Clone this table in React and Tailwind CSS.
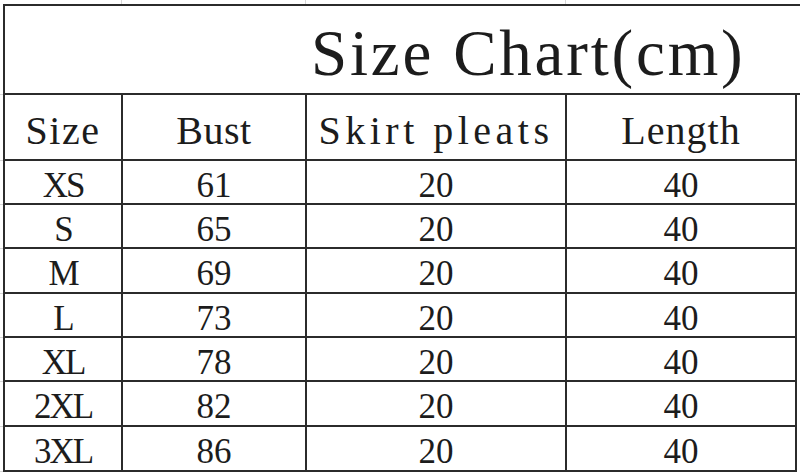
const rows = [
  { size: 'XS', bust: 61, h: 'h-[44px]' },
  { size: 'S', bust: 65, h: 'h-[44px]' },
  { size: 'M', bust: 69, h: 'h-[45px]' },
  { size: 'L', bust: 73, h: 'h-[44px]' },
  { size: 'XL', bust: 78, h: 'h-[44px]' },
  { size: '2XL', bust: 82, h: 'h-[45px]' },
  { size: '3XL', bust: 86, h: 'h-[45px]' },
];

const gutter = ['h-[91px]', 'h-[66px]', ...rows.map((r) => r.h)];

const cols = ['w-[118px]', 'w-[184px]', 'w-[260px]', 'w-[230px]'];

function Cell({ w, h, children, head, extra = '' }) {
  return (
    <div
      className={`${w} ${h} shrink-0 border-r-2 border-b-2 border-[#2b2b2b] text-center leading-none whitespace-pre ${
        head ? 'pt-[16px] text-[40px]' : 'pt-[7px] text-[35px]'
      } ${extra}`}
    >
      {children}
    </div>
  );
}

export default function App() {
  return (
    <div className="w-[800px] h-[473px] overflow-hidden bg-white text-[#1c1c1c] font-['Liberation_Serif',serif]">
      {/* faint spreadsheet grid above the table */}
      <div className="flex h-[4px]">
        <div className="w-[122px] border-r border-[#d6d6d6]" />
        <div className="w-[184px] border-r border-[#d6d6d6]" />
        <div className="w-[260px] border-r border-[#d6d6d6]" />
        <div className="flex-1" />
      </div>

      <div className="flex">
        <div className="w-[3px] flex flex-col">
          {gutter.map((h, i) => (
            <div key={i} className={`${h} border-b border-[#d6d6d6]`} />
          ))}
        </div>

        <div className="flex-1 border-t-2 border-l-2 border-[#2b2b2b]">
          <div className="h-[89px] border-b-2 border-[#2b2b2b] pl-[306px] pt-[15px] text-[65px] leading-none tracking-[2.8px] whitespace-pre">
            Size Chart(cm)
          </div>

          <div className="flex">
            <Cell w={cols[0]} h="h-[66px]" head extra="tracking-[1.5px]">Size</Cell>
            <Cell w={cols[1]} h="h-[66px]" head extra="tracking-[0.5px]">Bust</Cell>
            <Cell w={cols[2]} h="h-[66px]" head extra="tracking-[4.5px]">Skirt pleats</Cell>
            <Cell w={cols[3]} h="h-[66px]" head extra="tracking-[1px]">Length</Cell>
          </div>

          {rows.map((r) => (
            <div key={r.size} className="flex">
              <Cell w={cols[0]} h={r.h} extra="tracking-[-2px]">{r.size}</Cell>
              <Cell w={cols[1]} h={r.h}>{r.bust}</Cell>
              <Cell w={cols[2]} h={r.h}>20</Cell>
              <Cell w={cols[3]} h={r.h}>40</Cell>
            </div>
          ))}
        </div>
      </div>
    </div>
  );
}
